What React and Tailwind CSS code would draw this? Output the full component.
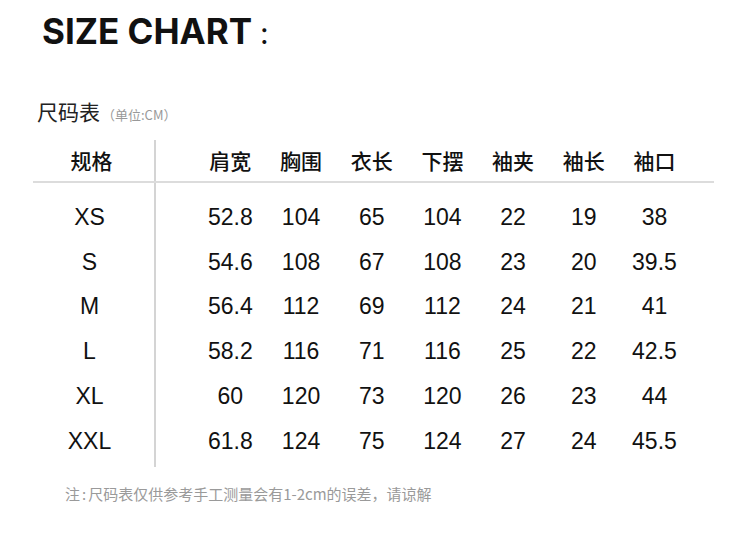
const headers = ["肩宽", "胸围", "衣长", "下摆", "袖夹", "袖长", "袖口"];

const rows = [
  ["XS", "52.8", "104", "65", "104", "22", "19", "38"],
  ["S", "54.6", "108", "67", "108", "23", "20", "39.5"],
  ["M", "56.4", "112", "69", "112", "24", "21", "41"],
  ["L", "58.2", "116", "71", "116", "25", "22", "42.5"],
  ["XL", "60", "120", "73", "120", "26", "23", "44"],
  ["XXL", "61.8", "124", "75", "124", "27", "24", "45.5"],
];

const cjk = { fontFamily: '"Noto Sans CJK SC", sans-serif' };
const num = { fontFamily: '"Liberation Sans", Arial, sans-serif' };

export default function App() {
  return (
    <div className="w-[750px] h-[554px] bg-white text-[#111] overflow-hidden">
      {/* Title */}
      <div className="pl-[42px] pt-[9px] flex items-baseline">
        <span
          className="text-[35px] font-bold leading-[44px]"
          style={{ fontFamily: "Inter, sans-serif" }}
        >
          SIZE CHART
        </span>
        <span className="ml-[8px] text-[30px] font-normal" style={{ fontFamily: "Inter, sans-serif" }}>
          :
        </span>
      </div>

      {/* Sub title */}
      <div className="pl-[37px] mt-[41px] flex items-baseline" style={cjk}>
        <span className="text-[21px] text-[#222] leading-[28px]">尺码表</span>
        <span className="ml-[2px] text-[13px] text-[#999]">（单位:CM）</span>
      </div>

      {/* Table */}
      <div className="ml-[33px] mt-[15px] w-[681px]">
        <div className="flex h-[43px] border-b-2 border-[#dcdcdc]" style={cjk}>
          <div className="w-[123px] border-r-2 border-[#d4d4d4] flex items-center justify-center pr-[4px] text-[21px] font-medium">
            规格
          </div>
          <div className="flex pl-[39px] items-center">
            {headers.map((h) => (
              <div key={h} className="w-[70.7px] text-center text-[21px] font-medium">
                {h}
              </div>
            ))}
          </div>
        </div>

        <div className="flex" style={num}>
          <div className="w-[123px] border-r-2 border-[#d4d4d4] pt-[12px] pb-[4px]">
            {rows.map((r) => (
              <div key={r[0]} className="h-[44.7px] flex items-center justify-center pr-[8px] text-[23px]">
                {r[0]}
              </div>
            ))}
          </div>
          <div className="pl-[39px] pt-[12px]">
            {rows.map((r) => (
              <div key={r[0]} className="flex h-[44.7px] items-center">
                {r.slice(1).map((v, i) => (
                  <div key={i} className="w-[70.7px] text-center text-[23px]">
                    {v}
                  </div>
                ))}
              </div>
            ))}
          </div>
        </div>
      </div>

      {/* Note */}
      <div className="pl-[65px] mt-[16px] text-[15px] text-[#9a9a9a]" style={cjk}>
        注<span className="mx-[2px]">:</span>尺码表仅供参考手工测量会有1-2cm的误差，请谅解
      </div>
    </div>
  );
}
